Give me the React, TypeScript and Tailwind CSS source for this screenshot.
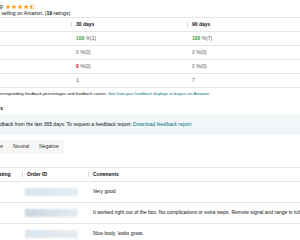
import React from "react";

const STAR = "M12 2l2.94 6.26 6.86.78-5.1 4.66 1.4 6.77L12 17.1l-6.1 3.37 1.4-6.77-5.1-4.66 6.86-.78z";

function Star({ half }: { half?: boolean }) {
  return (
    <svg width="6" height="6" viewBox="0 0 24 24">
      <defs>
        <clipPath id="half-star">
          <rect x="0" y="0" width="12" height="24" />
        </clipPath>
      </defs>
      {half ? (
        <>
          <path d={STAR} fill="none" stroke="#ffa41c" strokeWidth="2" />
          <path d={STAR} fill="#ffa41c" clipPath="url(#half-star)" />
        </>
      ) : (
        <path d={STAR} fill="#ffa41c" />
      )}
    </svg>
  );
}

type Cell = { value: string; rest?: string; color?: string };

const summary: { label: string; d30: Cell; d90: Cell }[] = [
  { label: "Positive", d30: { value: "100", rest: " %(1)", color: "text-[#3b9b3b]" }, d90: { value: "100", rest: " %(7)", color: "text-[#3b9b3b]" } },
  { label: "Neutral", d30: { value: "0", rest: " %(0)" }, d90: { value: "0", rest: " %(0)" } },
  { label: "Negative", d30: { value: "0", rest: " %(0)", color: "text-[#c40000]" }, d90: { value: "0", rest: " %(0)" } },
  { label: "Count", d30: { value: "1" }, d90: { value: "7" } },
];

const feedback = [
  { date: "05/14/2024", rating: "5", comment: "Very good", shade: "from-[#d7e2eb] to-[#e4ecf2]" },
  {
    date: "04/29/2024",
    rating: "5",
    comment:
      "It worked right out of the box. No complications or extra steps. Remote signal and range is rich and strong.",
    shade: "from-[#c6d5e2] to-[#e4ecf2]",
  },
  { date: "04/02/2024", rating: "5", comment: "Nice body, looks great.", shade: "from-[#dbe5ed] to-[#e6edf2]" },
];

function NumberCell({ cell, width }: { cell: Cell; width: string }) {
  return (
    <div className={`${width} shrink-0 pl-[5px] text-[#565959]`}>
      <span className={cell.color ? `font-bold ${cell.color}` : ""}>{cell.value}</span>
      {cell.rest}
    </div>
  );
}

function HeaderCell({ title, className }: { title: string; className: string }) {
  return (
    <div className={`flex items-center shrink-0 ${className}`}>
      <span className="w-px h-[5px] bg-[#d5d9d9]" />
      <span className="pl-[4px] font-bold">{title}</span>
    </div>
  );
}

export default function App() {
  return (
    <div className="w-[300px] h-[240px] overflow-hidden bg-white font-['Liberation_Sans',Arial,sans-serif] text-[5px] text-[#0f1111]">
      <div className="-ml-[60px] w-[360px] whitespace-nowrap">
        {/* rating summary */}
        <div className="pt-[3px]">
          <div className="flex items-center h-[7px] leading-[7px]">
            <span className="w-[64px] shrink-0 text-right">Feedback rating:</span>
            <span className="flex ml-[1px]">
              <Star />
              <Star />
              <Star />
              <Star />
              <Star half />
            </span>
          </div>
          <div className="flex h-[7px] leading-[7px]">
            <span className="w-[60px] shrink-0 text-right">Since you started</span>
            <span>
              &nbsp;selling on Amazon. (<b>19</b> ratings)
            </span>
          </div>
        </div>

        {/* 30 / 90 day table */}
        <div className="border-t border-[#e3e6e6]">
          <div className="flex items-center h-[14px] border-b border-[#e3e6e6]">
            <div className="w-[131px] shrink-0" />
            <HeaderCell title="30 days" className="w-[116px]" />
            <HeaderCell title="90 days" className="w-[113px]" />
          </div>
          {summary.map((row) => (
            <div key={row.label} className="flex items-center h-[14px] border-b border-[#e3e6e6]">
              <div className="w-[131px] shrink-0 pl-[4px]">{row.label}</div>
              <NumberCell cell={row.d30} width="w-[116px]" />
              <NumberCell cell={row.d90} width="w-[113px]" />
            </div>
          ))}
        </div>

        <div className="flex mt-[2px] leading-[7px] text-[4.2px]">
          <span className="w-[56px] shrink-0 text-right">The table shows the</span>
          <span>
            &nbsp;corresponding feedback percentages and feedback counts.{" "}
            <span className="text-[#007185]">See how your feedback displays to buyers on Amazon.</span>
          </span>
        </div>

        <div className="flex mt-[7px] leading-[8px] text-[5.5px] font-bold">
          <span className="w-[63px] shrink-0 text-right">Feedback comments</span>
        </div>

        <div className="flex items-center mt-[3px] h-[20px] bg-[#f1f7f8]">
          <span className="w-[60px] shrink-0 text-right">This table shows fee</span>
          <span>
            dback from the last 365 days. To request a feedback report:{" "}
            <span className="text-[#007185]">Download feedback report</span>
          </span>
        </div>

        <div className="mt-[5px] inline-flex items-center h-[13px] bg-[#f5f5f5] text-[#333]">
          <div className="w-[68px] flex justify-end">
            <span className="px-[5px] bg-white">All</span>
            <span className="px-[5px]">Positive</span>
          </div>
          <span className="px-[5px]">Neutral</span>
          <span className="px-[5px]">Negative</span>
        </div>

        {/* feedback list */}
        <div className="mt-[14px] border-t border-[#e3e6e6]">
          <div className="flex items-center h-[14px] border-b border-[#e3e6e6]">
            <div className="w-[50px] shrink-0 pl-[4px] font-bold">Date</div>
            <HeaderCell title="Rating" className="w-[32px]" />
            <HeaderCell title="Order ID" className="w-[66px]" />
            <HeaderCell title="Comments" className="w-[212px]" />
          </div>
          {feedback.map((f) => (
            <div key={f.date} className="flex items-center h-[21px] border-b border-[#e3e6e6]">
              <div className="w-[50px] shrink-0 pl-[4px]">{f.date}</div>
              <div className="w-[32px] shrink-0 pl-[5px]" />
              <div className="w-[66px] shrink-0 pl-[3px]">
                <div className={`w-[53px] h-[8px] bg-linear-to-r ${f.shade} blur-[1px]`} />
              </div>
              <div className="w-[212px] min-w-0 overflow-hidden pl-[5px]">{f.comment}</div>
            </div>
          ))}
        </div>
      </div>
    </div>
  );
}
